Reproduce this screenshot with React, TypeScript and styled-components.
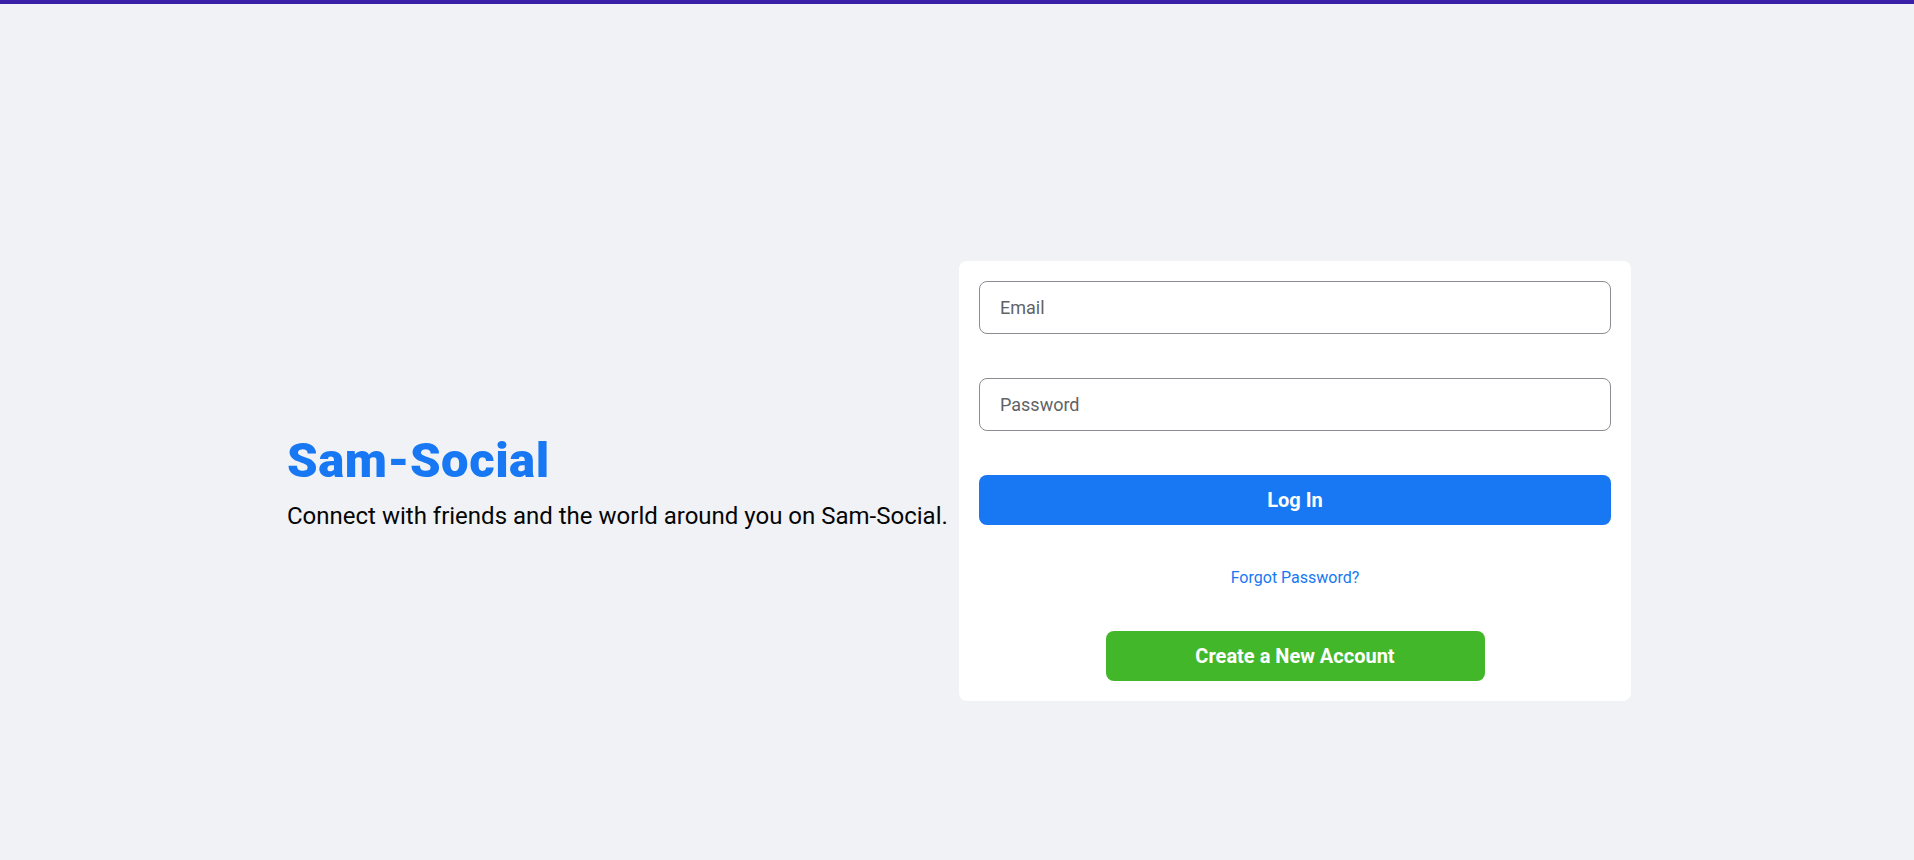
import React from "react";
import styled, { createGlobalStyle } from "styled-components";

const GlobalStyle = createGlobalStyle`
  html, body {
    margin: 0;
    padding: 0;
    background: #f0f2f5;
    font-family: Roboto, "Noto Sans", Arial, sans-serif;
  }
  * { box-sizing: border-box; }
`;

const Page = styled.div`
  min-height: 100vh;
  display: flex;
  flex-direction: column;
  background: #f0f2f5;
`;

const TopBar = styled.div`
  height: 4px;
  background: #3a1fa8;
  flex-shrink: 0;
`;

const Main = styled.main`
  flex: 1;
  display: flex;
  align-items: center;
  justify-content: center;
  padding-top: 98px;
  padding-left: 4px;
  gap: 12px;
`;

const Intro = styled.section`
  display: flex;
  flex-direction: column;
  width: 660px;
`;

const Brand = styled.h1`
  margin: 0 0 13px 0;
  font-size: 49px;
  font-weight: 900;
  line-height: normal;
  color: #1877f2;
  letter-spacing: 0.5px;
`;

const Tagline = styled.p`
  margin: 0;
  font-size: 24px;
  line-height: normal;
  color: #050505;
  white-space: nowrap;
`;

const Card = styled.form`
  width: 672px;
  background: #ffffff;
  border-radius: 8px;
  padding: 20px;
  display: flex;
  flex-direction: column;
  align-items: center;
  gap: 44px;
`;

const Field = styled.input`
  width: 100%;
  height: 53px;
  border: 1px solid #8a8d91;
  border-radius: 8px;
  padding: 0 20px;
  font-family: inherit;
  font-size: 18px;
  color: #1c1e21;
  background: #fff;
  outline: none;
  &::placeholder {
    color: #5f6368;
  }
`;

const Button = styled.button<{ $variant: "primary" | "success" }>`
  height: 50px;
  width: ${(p) => (p.$variant === "primary" ? "100%" : "379px")};
  border: none;
  border-radius: 8px;
  background: ${(p) => (p.$variant === "primary" ? "#1877f2" : "#42b72a")};
  color: #ffffff;
  font-family: inherit;
  font-size: 20px;
  font-weight: 700;
  cursor: pointer;
`;

const ForgotLink = styled.a`
  font-size: 16px;
  line-height: 18px;
  color: #1877f2;
  text-decoration: none;
`;

export default function App() {
  return (
    <>
      <GlobalStyle />
      <Page>
        <TopBar />
        <Main>
          <Intro>
            <Brand>Sam-Social</Brand>
            <Tagline>Connect with friends and the world around you on Sam-Social.</Tagline>
          </Intro>
          <Card onSubmit={(e) => e.preventDefault()}>
            <Field type="email" placeholder="Email" />
            <Field type="password" placeholder="Password" />
            <Button type="submit" $variant="primary">Log In</Button>
            <ForgotLink href="#">Forgot Password?</ForgotLink>
            <Button type="button" $variant="success">Create a New Account</Button>
          </Card>
        </Main>
      </Page>
    </>
  );
}
